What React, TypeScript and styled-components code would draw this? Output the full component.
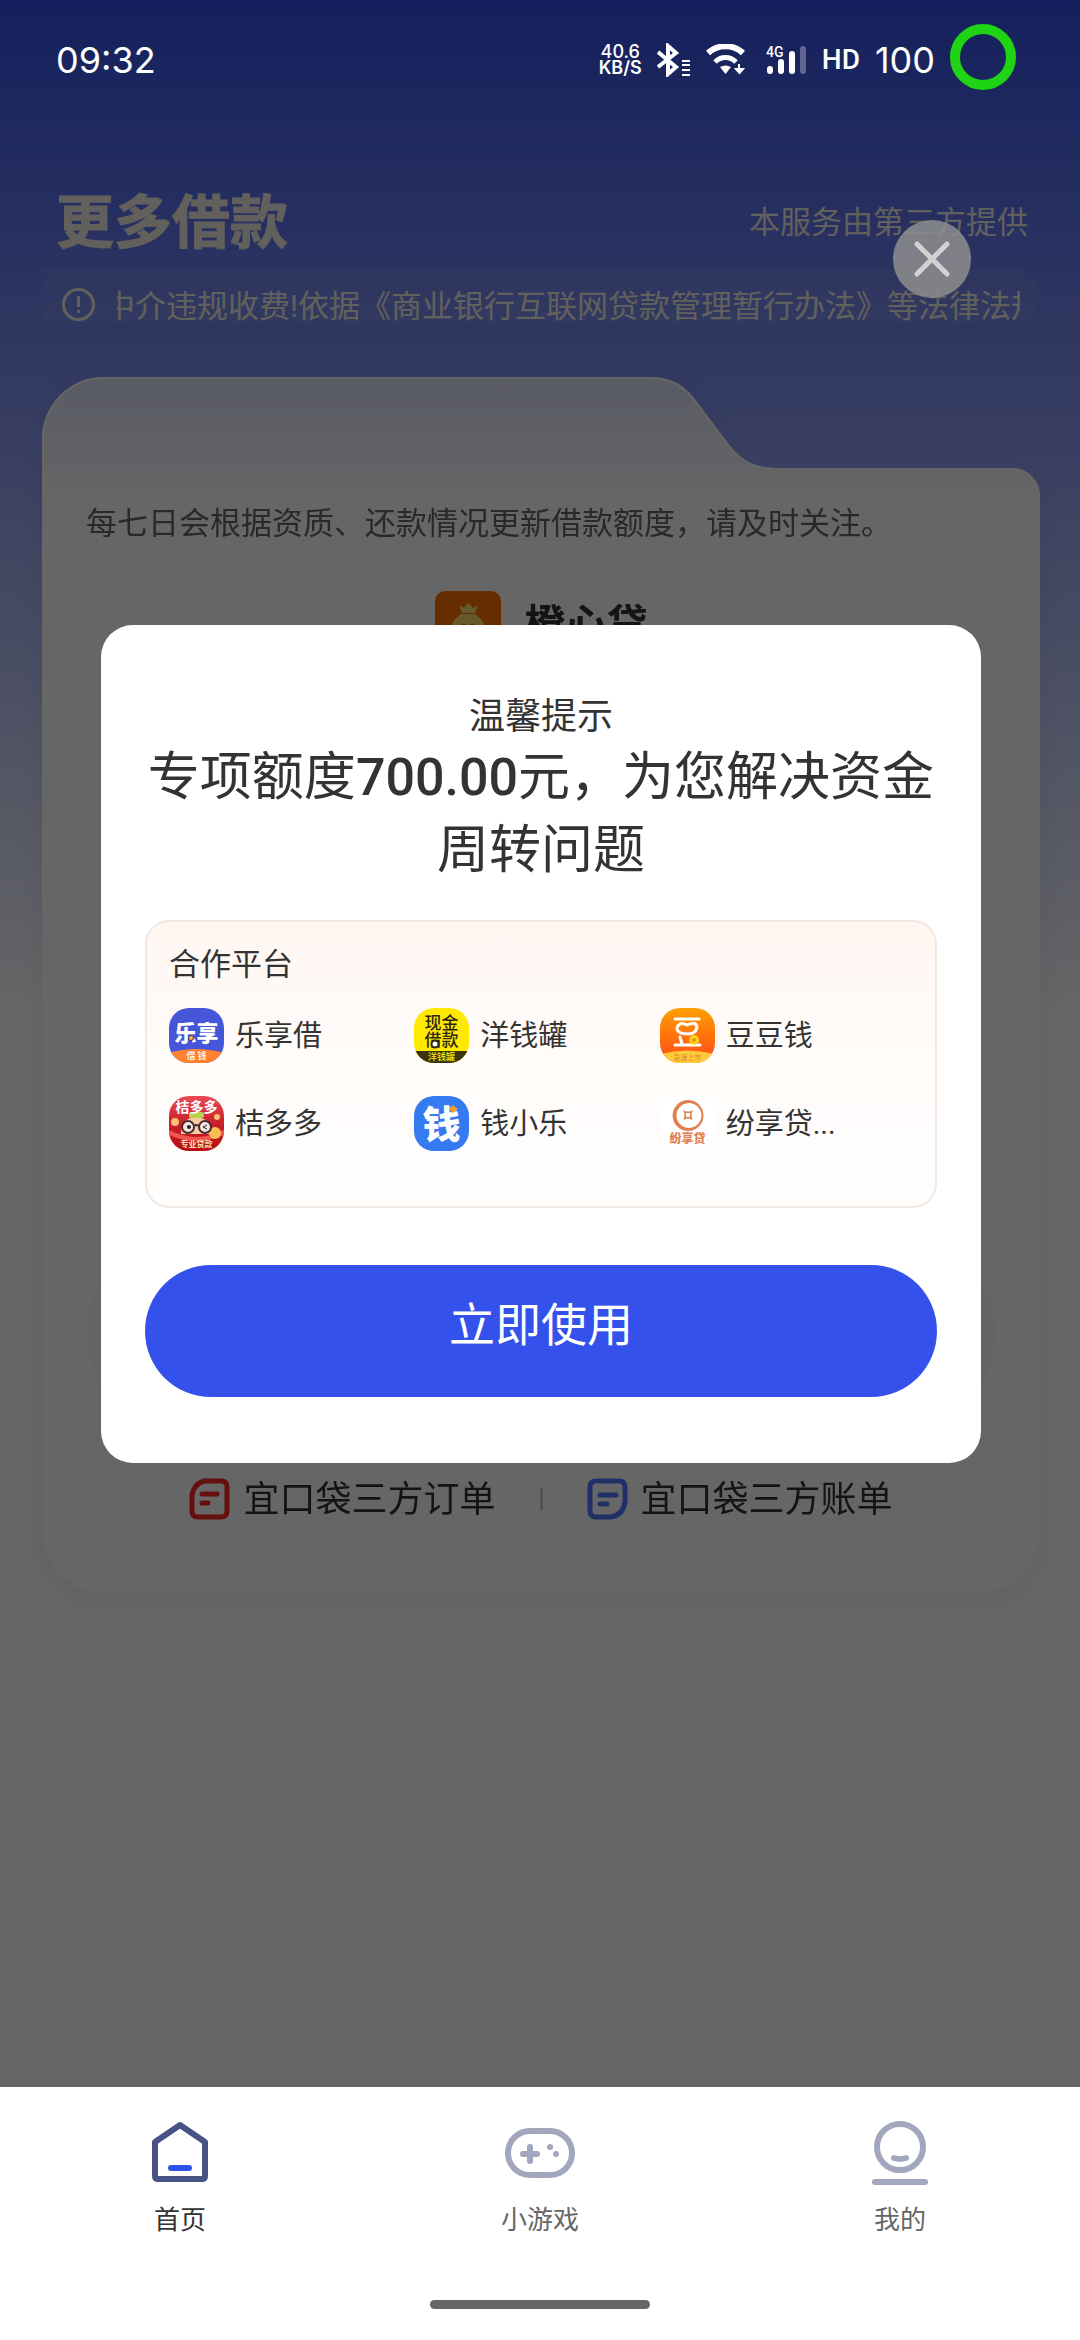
import React from "react";
import styled, { createGlobalStyle } from "styled-components";

const GlobalStyle = createGlobalStyle`
  *, *::before, *::after { box-sizing: border-box; }
  body {
    margin: 0;
    font-family: Roboto, "Noto Sans CJK SC", sans-serif;
    color: #333;
  }
  button { border: 0; padding: 0; background: none; font: inherit; color: inherit; cursor: pointer; }
  a { color: inherit; text-decoration: none; }
  h1, h2, p, ul { margin: 0; padding: 0; font-weight: 400; }
  ul { list-style: none; }
  svg { display: block; flex: none; }
`;

const Screen = styled.div`
  min-height: 100vh;
  display: flex;
  flex-direction: column;
`;

const Home = styled.main`
  position: relative;
  flex: 1;
  background: linear-gradient(180deg, #3451eb 0, #ffffff 1010px);
`;

/* ---------- status bar ---------- */

const StatusBar = styled.div`
  position: relative;
  z-index: 2;
  height: 120px;
  padding: 0 64px 0 56px;
  display: flex;
  align-items: center;
  color: #fff;
`;

const Clock = styled.time`
  flex: 1;
  font-family: Inter, sans-serif;
  font-size: 36px;
  line-height: 44px;
`;

const StatusIcons = styled.div`
  display: flex;
  align-items: center;
  gap: 15px;
`;

const NetSpeed = styled.div`
  display: flex;
  flex-direction: column;
  align-items: center;
  font-family: Inter, sans-serif;
  font-size: 18px;
  line-height: 16px;
  font-weight: 500;
`;

const Unit = styled.span`
  font-weight: 600;
`;

const HdMark = styled.span`
  font-size: 28px;
  line-height: 44px;
  font-weight: 500;
`;

const Battery = styled.span`
  font-family: Inter, sans-serif;
  font-size: 36px;
  line-height: 44px;
`;

const BatteryRing = styled.span`
  width: 66px;
  height: 66px;
  border: 10px solid #1fd315;
  border-radius: 50%;
  margin-bottom: 6px;
`;

/* ---------- page behind the dialog ---------- */

const Header = styled.header`
  margin-top: 71px;
  padding: 0 52px 0 56px;
  display: flex;
  align-items: center;
  justify-content: space-between;
`;

const PageTitle = styled.h1`
  font-size: 58px;
  line-height: 64px;
  font-weight: 700;
  color: #f5f0e6;
  -webkit-text-stroke: 1px #f5f0e6;
`;

const Provider = styled.p`
  font-size: 31px;
  line-height: 40px;
  color: #f5f0e6;
`;

const Notice = styled.div`
  margin: 13px 40px 0 42px;
  padding: 19px 20px 0 20px;
  height: 55px;
  display: flex;
  gap: 22px;
  color: #f5f0e6;
  border-radius: 0 28px 28px 0;
  background: rgba(255, 255, 255, 0.06);
`;

const Marquee = styled.p`
  flex: 1;
  min-width: 0;
  overflow: hidden;
  white-space: nowrap;
  text-indent: -13px;
  font-size: 31px;
  line-height: 40px;
`;

const Folder = styled.section`
  position: relative;
  margin: 54px 40px 0 42px;
  padding: 127px 44px 71px;
  border-radius: 0 0 62px 62px;
  background: linear-gradient(180deg, transparent 159px, #fff 159px);
  filter: drop-shadow(0 8px 12px rgba(0, 0, 0, 0.06));
`;

const FolderTab = styled.svg`
  position: absolute;
  top: 0;
  left: 0;
  width: 100%;
  height: 160px;
`;

const Hint = styled.p`
  position: relative;
  font-size: 31px;
  line-height: 40px;
  color: #666;
`;

const Product = styled.div`
  margin-top: 46px;
  display: flex;
  justify-content: center;
  align-items: center;
  gap: 24px;
  font-size: 41px;
  line-height: 66px;
  font-weight: 700;
`;

const PaleButton = styled.div`
  margin-top: 585px;
  height: 182px;
  border-radius: 91px;
  background: #fafafa;
`;

const Orders = styled.nav`
  margin-top: 51px;
  display: flex;
  justify-content: center;
  align-items: center;
  gap: 44px;
`;

const OrderLink = styled.a`
  display: flex;
  align-items: center;
  gap: 13px;
  font-size: 36px;
  line-height: 44px;
`;

const Label = styled.span`
  padding-top: 2px;
`;

const Divider = styled.span`
  width: 3px;
  height: 22px;
  background: #ccc;
`;

/* ---------- dialog ---------- */

const Overlay = styled.div`
  position: absolute;
  inset: 0;
  z-index: 1;
  display: flex;
  align-items: center;
  justify-content: center;
  padding: 0 99px 0 101px;
  background: rgba(0, 0, 0, 0.6);
`;

const CloseButton = styled.button`
  position: absolute;
  top: 220px;
  right: 109px;
  width: 78px;
  height: 78px;
  border-radius: 50%;
  display: grid;
  place-items: center;
  background: rgba(142, 142, 142, 0.85);
`;

const Dialog = styled.div`
  width: 100%;
  padding: 68px 44px 66px;
  border-radius: 32px;
  background: #fff;
  text-align: center;
`;

const DialogTag = styled.p`
  font-size: 36px;
  line-height: 48px;
`;

const DialogTitle = styled.h2`
  font-size: 52px;
  line-height: 73px;

  b { font-weight: 500; }
`;

const Platforms = styled.section`
  margin-top: 33px;
  padding: 23px 22px;
  height: 288px;
  border: 2px solid #f1e8e2;
  border-radius: 24px;
  background: linear-gradient(180deg, #fff6f1 0, #fffcfa 50%, #fffefd 100%);
  text-align: left;
`;

const PlatformsTitle = styled.h2`
  font-size: 31px;
  line-height: 40px;
`;

const PlatformGrid = styled.ul`
  margin-top: 23px;
  padding-right: 8px;
  display: grid;
  grid-template-columns: repeat(3, 1fr);
  row-gap: 33px;
`;

const Platform = styled.li`
  display: flex;
  align-items: center;
  gap: 11px;
  font-size: 29px;
  line-height: 53px;
  white-space: nowrap;
`;

const UseButton = styled.button`
  display: block;
  width: 100%;
  height: 132px;
  margin-top: 57px;
  padding-bottom: 12px;
  border-radius: 66px;
  background: #3451eb;
  color: #fff;
  font-size: 46px;
  line-height: 60px;
`;

/* ---------- bottom tabs ---------- */

const TabBar = styled.nav`
  padding: 28px 0 31px;
  background: #fff;
`;

const Tabs = styled.div`
  display: grid;
  grid-template-columns: repeat(3, 1fr);
`;

const Tab = styled.a<{ $active?: boolean }>`
  display: flex;
  flex-direction: column;
  align-items: center;
  gap: 17px;
  font-size: 26px;
  line-height: 32px;
  color: ${(p) => (p.$active ? "#333" : "#666")};
`;

const GestureBar = styled.div`
  width: 220px;
  height: 9px;
  margin: 64px auto 0;
  border-radius: 5px;
  background: #666;
`;

/* ---------- drawings ---------- */

const CJK = '"Noto Sans CJK SC", sans-serif';

const Bluetooth = () => (
  <svg width="34" height="34" viewBox="1 0 34 34" aria-hidden="true">
    <path d="M2 9 L20 24 L12 31 V3 L20 10 L2 24" fill="none" stroke="#fff" strokeWidth="4" />
    <path d="M26 18h8M26 22h8M26 27h8M26 32h8" stroke="#fff" strokeWidth="2" />
  </svg>
);

const Wifi = () => (
  <svg width="44" height="32" viewBox="0 0 44 32" aria-hidden="true">
    <path d="M2 9 C12 0 27 0 37 9" fill="none" stroke="#fff" strokeWidth="6" />
    <path d="M9 18 C15 12 24 12 30 18" fill="none" stroke="#fff" strokeWidth="5" />
    <path d="M14 23 Q19.500 20 25 23 L19.500 30 Z" fill="#fff" />
    <path d="M33 20v5M30 25h7l-3.500 4z" fill="#fff" stroke="#fff" strokeWidth="2" />
  </svg>
);

const Signal = () => (
  <svg width="42" height="32" viewBox="0 0 42 32" aria-hidden="true">
    <g strokeWidth="6" strokeLinecap="round" stroke="#fff">
      <path d="M5 25v2M16 18v9M27 10v17" />
      <path d="M38 5v22" opacity="0.3" />
    </g>
    <text x="1" y="13" fontFamily="Roboto, sans-serif" fontSize="14" fontWeight="500" fill="#fff">4G</text>
  </svg>
);

const Alert = () => (
  <svg width="33" height="35" viewBox="0 0 33 35" fill="none" stroke="currentColor" strokeWidth="3" aria-hidden="true">
    <circle cx="16.500" cy="17.500" r="15" />
    <path d="M16.500 9v11M16.500 23v3" />
  </svg>
);

const MoneyBag = () => (
  <svg width="66" height="66" viewBox="0 0 66 66" aria-hidden="true">
    <rect width="66" height="66" rx="10" fill="#ff7000" />
    <path d="M24 14l5 3 4-5 5 5 5-3-3 8H27z" fill="#ffe070" />
    <path d="M26 23h14q10 6 13 22v10q-4 6-10 6H23q-6 0-10-6V45q3-16 13-22z" fill="#ffe070" />
    <path d="M24 38q3-9 9-3 6-6 9 3 0 7-9 13-9-6-9-13z" fill="#ff6a10" />
  </svg>
);

const OrderIcon = () => (
  <svg width="41" height="42" viewBox="0 0 41 42" fill="none" stroke="#ff2626" strokeLinecap="round" aria-hidden="true">
    <path d="M15 3 H32 Q38 3 38 9 V33 Q38 39 32 39 H9 Q3 39 3 33 V17 Q5 6 15 3 Z" strokeWidth="5" />
    <path d="M13 16h15M13 25h6" strokeWidth="5" />
  </svg>
);

const BillIcon = () => (
  <svg width="41" height="42" viewBox="0 0 41 42" fill="none" stroke="#5078ff" strokeLinecap="round" aria-hidden="true">
    <path d="M9 3 H32 Q38 3 38 9 V24 Q36 37 24 39 H9 Q3 39 3 33 V9 Q3 3 9 3 Z" strokeWidth="5" />
    <path d="M13 17h16M13 26h7" strokeWidth="5" />
  </svg>
);

const LexiangLogo = () => (
  <svg width="55" height="55" viewBox="0 0 55 55" aria-hidden="true">
    <defs><clipPath id="lx"><rect width="55" height="55" rx="20" /></clipPath></defs>
    <g clipPath="url(#lx)">
      <rect width="55" height="55" fill="#4556d8" />
      <path d="M0 45 Q27 37 55 45 V55 H0Z" fill="#ff8230" />
    </g>
    <text x="27.500" y="33" textAnchor="middle" fontFamily={CJK} fontSize="22" fontWeight="900" fill="#fff">乐享</text>
    <circle cx="22" cy="30" r="2.500" fill="#ffb347" stroke="#26347f" />
    <text x="27.500" y="51" textAnchor="middle" fontFamily={CJK} fontSize="9" fontWeight="500" fill="#fff">借 钱</text>
  </svg>
);

const CashLogo = () => (
  <svg width="55" height="55" viewBox="0 0 55 55" aria-hidden="true">
    <defs><clipPath id="xj"><rect width="55" height="55" rx="20" /></clipPath></defs>
    <g clipPath="url(#xj)">
      <rect width="55" height="55" fill="#ffe900" />
      <rect y="43" width="55" height="12" fill="#3a3510" />
    </g>
    <g textAnchor="middle" fontFamily={CJK} fill="#2b2712" fontWeight="500">
      <text x="27.500" y="21" fontSize="17">现金</text>
      <text x="27.500" y="38" fontSize="17">借款</text>
      <text x="27.500" y="52" fontSize="9" fill="#ffe900">洋钱罐</text>
    </g>
    <circle cx="21" cy="36" r="3.500" fill="#fff" stroke="#2b2712" strokeWidth="2" />
  </svg>
);

const BeanLogo = () => (
  <svg width="55" height="55" viewBox="0 0 55 55" aria-hidden="true">
    <defs>
      <clipPath id="dd"><rect width="55" height="55" rx="20" /></clipPath>
      <linearGradient id="ddg" x1="0" y1="0" x2="0" y2="1">
        <stop offset="0" stopColor="#ff9f00" />
        <stop offset="0.800" stopColor="#ff5a14" />
      </linearGradient>
    </defs>
    <g clipPath="url(#dd)">
      <rect width="55" height="55" fill="url(#ddg)" />
      <path d="M0 46 Q27 39 55 46 V55 H0Z" fill="#ffc93c" />
    </g>
    <g fill="none" stroke="#fff" strokeWidth="3" strokeLinecap="round">
      <path d="M15 11h24M15 37h25M20 29l2 7" />
      <path d="M19 17 Q21 14 27 17 Q36 13 37 19 Q36 26 28 26 Q18 26 17 21 Q17 18 19 17Z" />
    </g>
    <circle cx="34" cy="32" r="3.500" fill="#ff8c1a" stroke="#ffd21a" strokeWidth="3" />
    <text x="27.500" y="52" textAnchor="middle" fontFamily={CJK} fontSize="7" fill="#d98a2a">急速上市</text>
  </svg>
);

const JieLogo = () => (
  <svg width="55" height="55" viewBox="0 0 55 55" aria-hidden="true">
    <defs>
      <clipPath id="jd"><rect width="55" height="55" rx="20" /></clipPath>
      <linearGradient id="jdg" x1="0" y1="0" x2="0" y2="1">
        <stop offset="0" stopColor="#ea4a58" />
        <stop offset="0.500" stopColor="#c9202a" />
        <stop offset="1" stopColor="#b80d12" />
      </linearGradient>
    </defs>
    <g clipPath="url(#jd)">
      <rect width="55" height="55" fill="url(#jdg)" />
      <path d="M0 34q28 14 55 0v5q-28 12-55 0z" fill="#f2574e" />
      <path d="M12 38q0-16 15-17 15 1 15 17z" fill="#f6c9a4" />
      <circle cx="6" cy="26" r="4" fill="#f9bf72" />
      <circle cx="46" cy="37" r="6" fill="#f9bf55" />
      <circle cx="48" cy="21" r="3" fill="#f9bf72" />
      <rect x="20" y="16" width="15" height="6" rx="2" fill="#b9d24a" />
    </g>
    <g fill="#f3e3e0" stroke="#4a2c2a" strokeWidth="2">
      <circle cx="19" cy="31" r="6" />
      <circle cx="36" cy="31" r="6" />
      <path d="M25 30q2-2 5 0" fill="none" />
    </g>
    <circle cx="20" cy="31" r="2" fill="#222" />
    <path d="M38 29l-4 2 4 2" fill="none" stroke="#222" />
    <g textAnchor="middle" fontFamily={CJK} fontWeight="700">
      <text x="27.500" y="16" fontSize="14" fill="#fff">桔多多</text>
      <text x="27.500" y="51" fontSize="8" fill="#ffe3b0">专业贷款</text>
    </g>
  </svg>
);

const QianLogo = () => (
  <svg width="55" height="55" viewBox="0 0 55 55" aria-hidden="true">
    <rect width="55" height="55" rx="20" fill="#357af0" />
    <text x="27.500" y="42" textAnchor="middle" fontFamily={CJK} fontSize="38" fontWeight="900" fill="#fff">钱</text>
    <path d="M39 9l4 4-4 4-4-4z" fill="#ff9a1a" />
  </svg>
);

const FenxiangLogo = () => (
  <svg width="55" height="55" viewBox="0 0 55 55" aria-hidden="true">
    <rect width="55" height="55" rx="20" fill="#fff" />
    <path fillRule="evenodd" d="M28 4a15.500 15.500 0 1 0 .1 0zM29 7a12.500 12.500 0 1 1-.1 0z" fill="#e2804f" />
    <path d="M23 14q5 3 10 0-3 5 0 10-5-3-10 0 3-5 0-10zM26 17v4h4v-4z" fill="#e2804f" fillRule="evenodd" />
    <text x="27.500" y="47" textAnchor="middle" fontFamily={CJK} fontSize="12" fontWeight="900" fill="#e2804f">纷享贷</text>
  </svg>
);

const platforms: { name: string; Logo: React.FC }[] = [
  { name: "乐享借", Logo: LexiangLogo },
  { name: "洋钱罐", Logo: CashLogo },
  { name: "豆豆钱", Logo: BeanLogo },
  { name: "桔多多", Logo: JieLogo },
  { name: "钱小乐", Logo: QianLogo },
  { name: "纷享贷...", Logo: FenxiangLogo },
];

const TabIcon = ({ color, children }: { color: string; children: React.ReactNode }) => (
  <svg width="72" height="72" viewBox="0 0 72 72" fill="none" stroke={color} strokeWidth="6" strokeLinecap="round" strokeLinejoin="round" aria-hidden="true">
    {children}
  </svg>
);

export default function App() {
  return (
    <Screen>
      <GlobalStyle />
      <Home>
        <StatusBar>
          <Clock>09:32</Clock>
          <StatusIcons>
            <NetSpeed><span>40.6</span><Unit>KB/S</Unit></NetSpeed>
            <Bluetooth />
            <Wifi />
            <Signal />
            <HdMark>HD</HdMark>
            <Battery>100</Battery>
            <BatteryRing />
          </StatusIcons>
        </StatusBar>

        <Header>
          <PageTitle>更多借款</PageTitle>
          <Provider>本服务由第三方提供</Provider>
        </Header>
        <Notice>
          <Alert />
          <Marquee>中介违规收费!依据《商业银行互联网贷款管理暂行办法》等法律法规</Marquee>
        </Notice>

        <Folder>
          <FolderTab viewBox="0 0 998 160" preserveAspectRatio="none" aria-hidden="true">
            <defs>
              <linearGradient id="tab" x1="0" y1="0" x2="0" y2="1">
                <stop offset="0" stopColor="#dde1fb" />
                <stop offset="0.750" stopColor="#ffffff" />
              </linearGradient>
            </defs>
            <path d="M0 160V62A62 62 0 0 1 62 0H609C632 0 646 12 656 26L686 66C700 84 712 91 735 91H970A28 28 0 0 1 998 119V160Z" fill="url(#tab)" />
            <path d="M1 160V62A61 61 0 0 1 62 1H609C632 1 646 13 655 27L685 67C699 85 712 92 735 92H970A27 27 0 0 1 997 119V160" fill="none" stroke="#fff" strokeWidth="2" />
          </FolderTab>
          <Hint>每七日会根据资质、还款情况更新借款额度，请及时关注。</Hint>
          <Product><MoneyBag /><Label>橙心贷</Label></Product>
          <PaleButton />
          <Orders>
            <OrderLink href="#orders"><OrderIcon /><Label>宜口袋三方订单</Label></OrderLink>
            <Divider />
            <OrderLink href="#bills"><BillIcon /><Label>宜口袋三方账单</Label></OrderLink>
          </Orders>
        </Folder>

        <Overlay>
          <CloseButton aria-label="关闭">
            <svg width="36" height="36" viewBox="0 0 36 36" stroke="#d2d2d2" strokeWidth="5" strokeLinecap="round" aria-hidden="true">
              <path d="M3 3L33 33M33 3L3 33" />
            </svg>
          </CloseButton>
          <Dialog role="dialog" aria-modal="true">
            <DialogTag>温馨提示</DialogTag>
            <DialogTitle>专项额度<b>700.00</b>元，为您解决资金周转问题</DialogTitle>
            <Platforms>
              <PlatformsTitle>合作平台</PlatformsTitle>
              <PlatformGrid>
                {platforms.map(({ name, Logo }) => (
                  <Platform key={name}><Logo /><Label>{name}</Label></Platform>
                ))}
              </PlatformGrid>
            </Platforms>
            <UseButton>立即使用</UseButton>
          </Dialog>
        </Overlay>
      </Home>

      <TabBar>
        <Tabs>
          <Tab href="#home" $active>
            <TabIcon color="#475285">
              <path d="M36 10L61 27V61Q61 64 58 64H14Q11 64 11 61V27Z" />
              <path d="M27 53H45" stroke="#2f54eb" />
            </TabIcon>
            首页
          </Tab>
          <Tab href="#games">
            <TabIcon color="#a3a7bd">
              <rect x="4" y="16" width="64" height="44" rx="22" />
              <path d="M19 39H33M26 32V46" />
              <path d="M46 32h.1M52 39h.1" />
            </TabIcon>
            小游戏
          </Tab>
          <Tab href="#me">
            <TabIcon color="#a3a7bd">
              <circle cx="36" cy="32" r="23" />
              <path d="M30 43Q36 45 42 43" />
              <path d="M11 67H61" />
            </TabIcon>
            我的
          </Tab>
        </Tabs>
        <GestureBar />
      </TabBar>
    </Screen>
  );
}
